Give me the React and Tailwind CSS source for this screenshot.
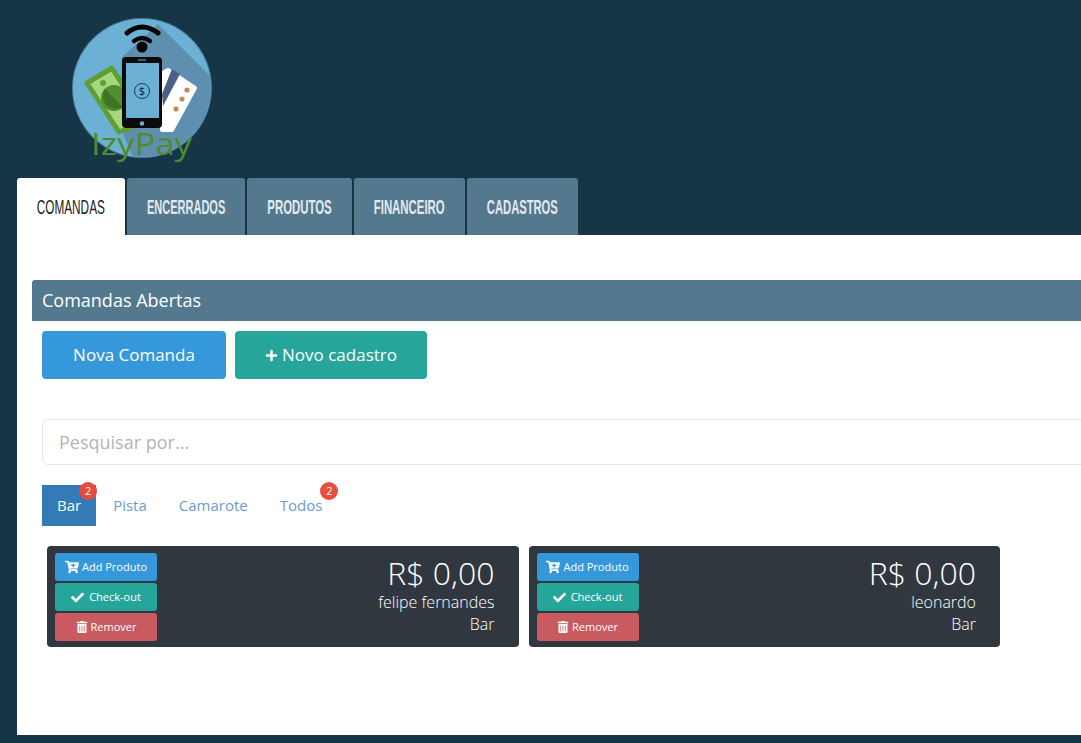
import { FaCartPlus, FaCheck, FaPlus, FaTrashAlt } from 'react-icons/fa';

const tabs = [
  { label: 'ENCERRADOS', w: 'w-[118px]', sx: 'scale-x-[0.55]' },
  { label: 'PRODUTOS', w: 'w-[105px]', sx: 'scale-x-[0.57]' },
  { label: 'FINANCEIRO', w: 'w-[111px]', sx: 'scale-x-[0.57]' },
  { label: 'CADASTROS', w: 'w-[111px]', sx: 'scale-x-[0.56]' },
];

const comandas = [
  { id: 1, name: 'felipe fernandes', place: 'Bar', total: 'R$ 0,00' },
  { id: 2, name: 'leonardo', place: 'Bar', total: 'R$ 0,00' },
];

function Logo() {
  return (
    <svg width="170" height="168" viewBox="0 0 170 168" className="block ml-[60px]">
      <defs>
        <clipPath id="disc">
          <circle cx="82" cy="78" r="69" />
        </clipPath>
      </defs>
      <circle cx="82" cy="78" r="70" fill="#4b7f9c" />
      <circle cx="82" cy="78" r="69" fill="#6cb0d6" />
      <g clipPath="url(#disc)">
        <polygon points="98,14 160,76 160,160 78,160 60,116 62,47" fill="#5f8fae" />
      </g>
      <polygon points="27,73 52,58 86,112 59,122" fill="#a7d67f" stroke="#5f9e35" strokeWidth="5" strokeLinejoin="round" />
      <circle cx="54" cy="88" r="13" fill="#4f8f30" />
      <path d="M45 79 L63 97 A13 13 0 0 1 45 79 Z" fill="#3f7426" />
      <circle cx="43" cy="73" r="3" fill="#5f9e35" />
      <polygon points="104,62 108,60 135,78 112,120 102,120" fill="#ffffff" stroke="#ffffff" strokeWidth="4" strokeLinejoin="round" />
      <polygon points="112,59 120,64 103,96 102,84" fill="#4a6184" />
      <circle cx="127" cy="80" r="2.6" fill="#c98a55" />
      <circle cx="122" cy="89" r="2.6" fill="#c98a55" />
      <circle cx="116" cy="99" r="2.6" fill="#c98a55" />
      <path d="M67 23 Q82 11 98 23" fill="none" stroke="#000" strokeWidth="5" strokeLinecap="round" />
      <path d="M74 31 Q82 25 90 31" fill="none" stroke="#000" strokeWidth="4.5" strokeLinecap="round" />
      <circle cx="82" cy="37" r="5.5" fill="#000" />
      <rect x="62" y="47" width="40" height="71" rx="4" fill="#0b0b0b" />
      <rect x="66" y="53" width="33" height="55" fill="#6cb0d6" />
      <rect x="78" y="49.5" width="8" height="1" fill="#6cb0d6" />
      <circle cx="82" cy="113.5" r="2.2" fill="#6cb0d6" />
      <circle cx="82" cy="81" r="7.5" fill="none" stroke="#10202b" strokeWidth="0.8" />
      <text x="82" y="85" textAnchor="middle" fontSize="11" fill="#10202b" fontFamily="'Open Sans', sans-serif">$</text>
      <text x="31" y="145" textLength="101" lengthAdjust="spacingAndGlyphs" fontSize="31" fontWeight="500" fill="#4f8a2f" fontFamily="'Open Sans', sans-serif">IzyPay</text>
    </svg>
  );
}

function Badge({ className }) {
  return (
    <span className={`absolute top-[-3px] flex items-center justify-center w-[18px] h-[18px] rounded-full bg-[#e74c3c] text-white text-[11px] ${className}`}>
      2
    </span>
  );
}

function CardButton({ bg, icon, label }) {
  return (
    <button className={`flex items-center justify-center gap-[3px] w-[102px] h-[28px] rounded-[3px] text-white text-[11px] ${bg}`}>
      {icon}
      {label}
    </button>
  );
}

function Comanda({ c }) {
  return (
    <div className="flex justify-between w-[471.5px] h-[101px] pl-[8px] pr-[24px] pt-[7px] rounded-[4px] bg-[#30373f]">
      <div className="flex flex-col gap-[2px]">
        <CardButton bg="bg-[#3498db]" icon={<FaCartPlus size={14} />} label="Add Produto" />
        <CardButton bg="bg-[#26a69a]" icon={<FaCheck size={13} className="mr-[2px]" />} label="Check-out" />
        <CardButton bg="bg-[#c95a5f]" icon={<FaTrashAlt size={12} />} label="Remover" />
      </div>
      <div className="text-right text-white font-light">
        <div className="text-[32px] leading-[36px] pt-[2px]">{c.total}</div>
        <div className="text-[16px] leading-[22px]">{c.name}</div>
        <div className="text-[16px] leading-[20px] mt-[1px]">{c.place}</div>
      </div>
    </div>
  );
}

export default function App() {
  return (
    <div className="h-screen overflow-hidden bg-[#163648] font-['Open_Sans',sans-serif]">
      <div className="h-[178px] pt-[10px]">
        <Logo />
      </div>

      <div className="flex ml-[17px] h-[57px] gap-[2px]">
        <div className="flex items-center justify-center w-[108px] rounded-t-[3px] bg-white text-[#222] text-[20px] font-['Liberation_Sans',sans-serif]">
          <span className="inline-block scale-x-[0.59]">COMANDAS</span>
        </div>
        {tabs.map(t => (
          <div key={t.label} className={`flex items-center justify-center rounded-t-[3px] bg-[#54798f] text-[#e4e9ec] text-[20px] font-bold font-['Liberation_Sans',sans-serif] ${t.w}`}>
            <span className={`inline-block ${t.sx}`}>{t.label}</span>
          </div>
        ))}
      </div>

      <div className="ml-[17px] h-[500px] pt-[45px] pl-[15px] bg-white">
        <div className="h-[41px] -mr-[10px] pl-[10px] flex items-center rounded-t-[3px] bg-[#54798f] text-white text-[18px]">
          Comandas Abertas
        </div>

        <div className="pl-[10px]">
          <div className="flex gap-[9px] mt-[10px]">
            <button className="w-[184px] h-[48px] rounded-[4px] bg-[#3498db] text-white text-[17px]">Nova Comanda</button>
            <button className="flex items-center justify-center gap-[4px] w-[192px] h-[48px] rounded-[4px] bg-[#26a69a] text-white text-[17px]">
              <FaPlus size={13} />
              Novo cadastro
            </button>
          </div>

          <div className="flex items-center h-[46px] -mr-[10px] mt-[40px] pl-[16px] border border-[#e5e5e5] rounded-[6px] text-[#b4b4b4] text-[18px]">
            Pesquisar por...
          </div>

          <div className="flex mt-[20px] text-[15px] text-[#6b9bd1]">
            <div className="relative h-[41px] flex items-center px-[15px] bg-[#337ab7] text-white">
              Bar
              <Badge className="right-[-1px]" />
            </div>
            <div className="h-[41px] flex items-center ml-[2px] px-[15px]">Pista</div>
            <div className="h-[41px] flex items-center ml-[2px] px-[15px]">Camarote</div>
            <div className="relative h-[41px] flex items-center ml-[2px] px-[15px]">
              Todos
              <Badge className="right-[-1px]" />
            </div>
          </div>

          <div className="flex gap-[10px] mt-[20px] ml-[5px]">
            {comandas.map(c => <Comanda key={c.id} c={c} />)}
          </div>
        </div>
      </div>
    </div>
  );
}
